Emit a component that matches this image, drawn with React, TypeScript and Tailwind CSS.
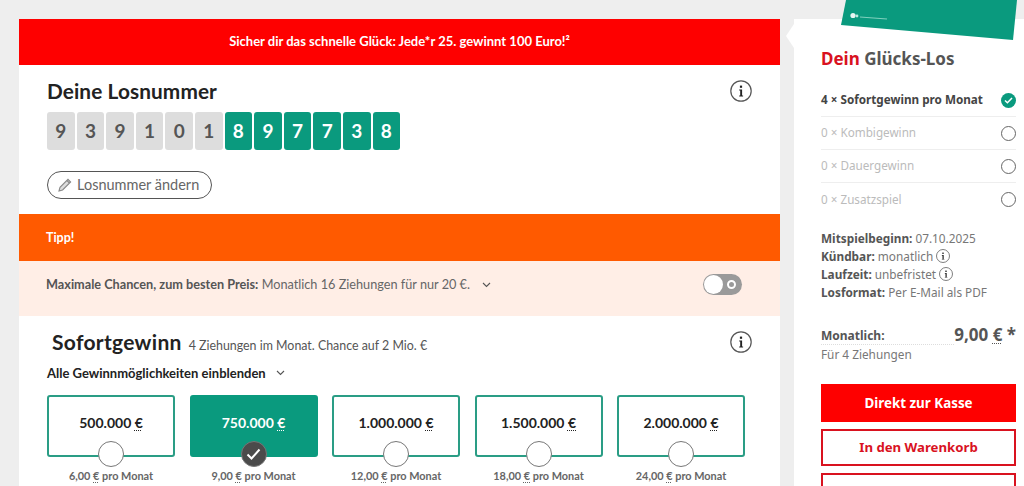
import React from "react";

const Info = ({ size = 22, className = "" }: { size?: number; className?: string }) => (
  <svg width={size} height={size} viewBox="0 0 22 22" className={className}>
    <circle cx="11" cy="11" r="10.2" fill="none" stroke="#555" strokeWidth="1.2" />
    <path d="M9.2 9.6h2.9v6h1v1H9.2v-1h1v-5h-1z" fill="#222" />
    <rect x="9.9" y="5.6" width="2.2" height="2.2" fill="#222" />
  </svg>
);

const Chevron = ({ className = "" }: { className?: string }) => (
  <svg width="9" height="6" viewBox="0 0 9 6" className={className}>
    <path d="M1 1l3.5 3.5L8 1" fill="none" stroke="#555" strokeWidth="1.1" />
  </svg>
);

const Euro = () => (
  <span className="underline decoration-dotted decoration-1 underline-offset-2">€</span>
);

const digits = "939101897738".split("");

const cards = [
  { v: "500.000", p: "6,00" },
  { v: "750.000", p: "9,00", on: true },
  { v: "1.000.000", p: "12,00" },
  { v: "1.500.000", p: "18,00" },
  { v: "2.000.000", p: "24,00" },
];

const rows = [
  { t: "4 × Sofortgewinn pro Monat", on: true },
  { t: "0 × Kombigewinn" },
  { t: "0 × Dauergewinn" },
  { t: "0 × Zusatzspiel" },
];

export default function App() {
  return (
    <div className="relative flex h-[486px] w-[1024px] overflow-hidden bg-[#eeeeee] pt-[19px] pl-[19px]">
      <main className="w-[761px] shrink-0 bg-white font-['Lato',sans-serif]">
        <div className="flex h-[46px] items-center justify-center bg-[#fe0000] text-[13px] font-bold text-white">
          Sicher dir das schnelle Glück: Jede*r 25. gewinnt 100 Euro!²
        </div>

        <section className="relative h-[149px] pl-[28px] pt-[11px]">
          <h1 className="text-[20.8px] font-bold leading-[30px] tracking-[0.1px] text-[#222]">Deine Losnummer</h1>
          <div className="mt-[6px] flex gap-[2px]">
            {digits.map((d, i) => (
              <div
                key={i}
                className={`flex h-[38px] w-[27.6px] items-center justify-center rounded-[3px] text-[19px] font-bold ${
                  i < 6 ? "bg-[#dddddd] text-[#555]" : "bg-[#0a9a7e] text-white"
                }`}
              >
                {d}
              </div>
            ))}
          </div>
          <button className="mt-[21px] flex h-[28px] w-[165px] items-center gap-[5px] whitespace-nowrap rounded-full border border-[#555] pl-[10px] text-[14.5px] text-[#666]">
            <svg width="14" height="14" viewBox="0 0 14 14" className="shrink-0">
              <path d="M1 13l1-3.6L10 1.4l2.6 2.6-8 8z M9 2.6l2.4 2.4" fill="#ddd" stroke="#888" strokeWidth="1.1" />
            </svg>
            Losnummer ändern
          </button>
          <Info className="absolute right-[28px] top-[15px]" />
        </section>

        <div className="flex h-[47px] items-center bg-[#ff5a00] pl-[27px] pt-[1px] text-[12.5px] font-bold text-white">Tipp!</div>

        <div className="relative flex h-[55px] items-start bg-[#ffeee6] pl-[27px] pt-[14px] text-[12.7px] leading-[18px] text-[#666]">
          <span>
            <b className="font-bold text-[#555]">Maximale Chancen, zum besten Preis:</b> Monatlich 16 Ziehungen für nur 20 €.
          </span>
          <Chevron className="ml-[12px] mt-[7px]" />
          <div className="absolute right-[38px] top-[13px] flex h-[21px] w-[39px] items-center rounded-full bg-[#9a9a9a]">
            <span className="ml-[1px] h-[19px] w-[19px] rounded-full bg-white" />
            <span className="ml-[4px] h-[9px] w-[9px] rounded-full border-2 border-white" />
          </div>
        </div>

        <section className="relative pl-[28px] pt-[11px]">
          <div className="flex items-baseline">
            <h2 className="ml-[5px] text-[21px] font-bold leading-[30px] tracking-[0.3px] text-[#222]">Sofortgewinn</h2>
            <span className="ml-[7px] text-[12.4px] text-[#555]">4 Ziehungen im Monat. Chance auf 2 Mio. €</span>
          </div>
          <div className="mt-[7px] flex items-center text-[13px] font-bold leading-[18px] text-[#222]">
            Alle Gewinnmöglichkeiten einblenden
            <Chevron className="ml-[10px]" />
          </div>
          <Info className="absolute right-[28px] top-[15px]" />
          <div className="mt-[13px] flex gap-[14.5px]">
            {cards.map((c) => (
              <div key={c.v} className="flex w-[128px] flex-col items-center">
                <div
                  className={`relative flex h-[62px] w-full items-start justify-center rounded-[3px] border-2 pt-[16px] text-[14px] font-bold leading-[20px] ${
                    c.on ? "border-[#0a9a7e] bg-[#0a9a7e] text-white" : "border-[#2a9d85] bg-white text-[#222]"
                  }`}
                >
                  <span>
                    {c.v} <Euro />
                  </span>
                  {c.on ? (
                    <span className="absolute bottom-[-12px] left-1/2 flex h-[26px] w-[26px] -translate-x-1/2 items-center justify-center rounded-full border border-[#777] bg-[#4b4b4b]">
                      <svg width="15" height="12" viewBox="0 0 15 12">
                        <path d="M1.5 6.5l4 4L13.5 1.5" fill="none" stroke="#fff" strokeWidth="2" />
                      </svg>
                    </span>
                  ) : (
                    <span className="absolute bottom-[-12px] left-1/2 h-[26px] w-[26px] -translate-x-1/2 rounded-full border border-[#777] bg-white" />
                  )}
                </div>
                <div className="mt-[11px] whitespace-nowrap text-[10.9px] font-bold leading-[16px] text-[#666]">
                  {c.p} <Euro /> pro Monat
                </div>
              </div>
            ))}
          </div>
        </section>
      </main>

      <aside className="relative ml-[14px] w-[230px] shrink-0 bg-white pl-[27px] pr-[8px] pt-[28px] font-['Noto_Sans',sans-serif]">
        <h2 className="text-[17px] font-bold leading-[24px] text-[#555]">
          <span className="text-[#d9121f]">Dein</span> Glücks-Los
        </h2>
        <ul className="mt-[13px]">
          {rows.map((r, i) => (
            <li
              key={r.t}
              className={`flex h-[33px] items-center justify-between text-[11.7px] ${i < 3 ? "border-b border-[#eeeeee]" : ""} ${
                r.on ? "font-bold text-[#444]" : "text-[#bbbbbb]"
              }`}
            >
              {r.t}
              {r.on ? (
                <span className="flex h-[15px] w-[15px] items-center justify-center rounded-full bg-[#0a9a7e]">
                  <svg width="9" height="7" viewBox="0 0 9 7">
                    <path d="M1 3.5l2.4 2.3L8 1" fill="none" stroke="#fff" strokeWidth="1.5" />
                  </svg>
                </span>
              ) : (
                <span className="h-[15px] w-[15px] rounded-full border border-[#666]" />
              )}
            </li>
          ))}
        </ul>
        <div className="mt-[13px] text-[11.8px] leading-[18px] text-[#777]">
          <div>
            <b className="text-[#555]">Mitspielbeginn:</b> 07.10.2025
          </div>
          <div className="flex items-center gap-[3px]">
            <span>
              <b className="text-[#555]">Kündbar:</b> monatlich
            </span>
            <Info size={14} />
          </div>
          <div className="flex items-center gap-[3px]">
            <span>
              <b className="text-[#555]">Laufzeit:</b> unbefristet
            </span>
            <Info size={14} />
          </div>
          <div>
            <b className="text-[#555]">Losformat:</b> Per E-Mail als PDF
          </div>
        </div>
        <div className="mt-[24px] flex items-end justify-between">
          <span className="flex-1 border-b border-dotted border-[#ddd] text-[12px] font-bold leading-[16px] text-[#555]">Monatlich:</span>
          <span className="text-[17px] font-bold leading-[20px] text-[#555]">
            9,00 <Euro /> *
          </span>
        </div>
        <div className="text-[11.8px] leading-[18px] text-[#777]">Für 4 Ziehungen</div>
        <button className="mt-[21px] flex h-[38px] w-full items-center justify-center bg-[#fe0000] text-[13.4px] font-bold text-white">
          Direkt zur Kasse
        </button>
        <button className="mt-[7px] flex h-[37px] w-full items-center justify-center border-2 border-[#d9121f] bg-white text-[13.2px] font-bold text-[#d9121f]">
          In den Warenkorb
        </button>
        <div className="mt-[7px] h-[37px] w-full border-2 border-[#d9121f] bg-white" />

        <span className="absolute left-[-8px] top-[5px] h-0 w-0 border-y-[12px] border-r-[8px] border-y-transparent border-r-white" />
        <div className="absolute left-[47px] top-[-19px] h-[60px] w-[176px]">
          <svg width="176" height="60" viewBox="0 0 176 60" className="absolute left-0 top-0">
            <polygon points="5,0 176,0 172,40 0,25" fill="#0a9a7e" />
            <circle cx="12" cy="15.5" r="2.6" fill="#e6f6f2" />
            <circle cx="16" cy="16" r="1.4" fill="#bfe8de" />
            <line x1="19" y1="17" x2="46" y2="19" stroke="#7fd0bd" strokeWidth="1.2" />
          </svg>
        </div>
      </aside>
    </div>
  );
}
